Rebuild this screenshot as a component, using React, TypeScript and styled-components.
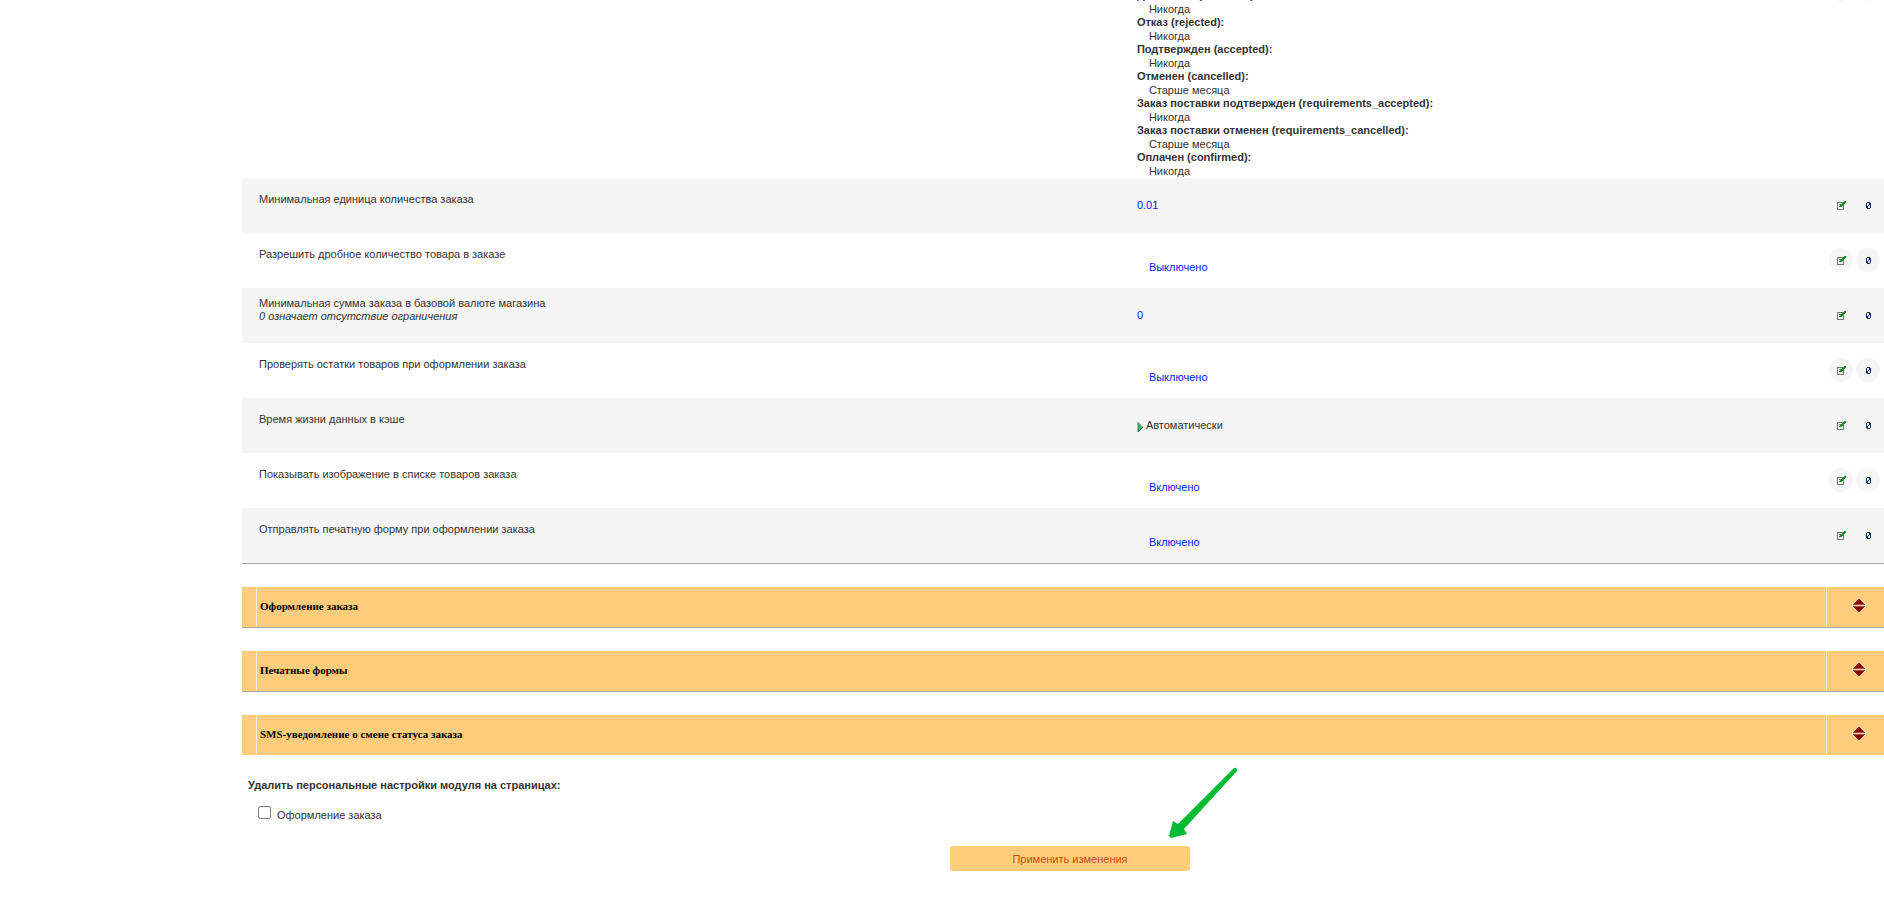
import React from "react";
import styled, { createGlobalStyle } from "styled-components";

const GlobalStyle = createGlobalStyle`
  *, *::before, *::after { box-sizing: border-box; }
  body {
    margin: 0;
    background: #fff;
    color: #333;
    font: 11px/13px "Liberation Sans", Arial, sans-serif;
    overflow: hidden;
  }
`;

const Page = styled.main`
  display: flex;
  flex-direction: column;
  padding-left: 242px;
`;

const Settings = styled.table`
  width: 100%;
  table-layout: fixed;
  border-collapse: separate;
  border-spacing: 0;
  border-bottom: 1px solid #aaa;
`;

const NameColumn = styled.col`
  width: 54.5%;
`;

const ActionsColumn = styled.col`
  width: 60px;
`;

const Row = styled.tr<{ $shaded?: boolean }>`
  height: 55px;
  background: ${(p) => (p.$shaded ? "#f5f5f5" : "#fff")};
`;

const NameCell = styled.td<{ $hinted?: boolean }>`
  padding: ${(p) => (p.$hinted ? "9px" : "15px")} 0 0 17px;
  vertical-align: top;
`;

const Hint = styled.em`
  display: block;
`;

const ValueCell = styled.td`
  padding: 0;
  vertical-align: middle;
`;

const Value = styled.div<{ $nested?: boolean }>`
  color: #001eff;
  padding: ${(p) => (p.$nested ? "14px 0 0 12px" : "0")};
`;

const AutoValue = styled.div`
  display: flex;
  align-items: center;
  gap: 3px;
`;

const ActionsCell = styled.td<{ $top?: boolean }>`
  padding: 0;
  vertical-align: ${(p) => (p.$top ? "top" : "middle")};
`;

const Actions = styled.div<{ $scrolled?: boolean }>`
  display: flex;
  gap: 3px;
  margin-top: ${(p) => (p.$scrolled ? "-23px" : "0")};
  padding: 0 0 1px 5px;
`;

const RoundButton = styled.button`
  display: flex;
  align-items: center;
  justify-content: center;
  width: 24px;
  height: 24px;
  padding: 0;
  border: 0;
  border-radius: 50%;
  background: #f5f5f5;
`;

const StatusViewport = styled.div`
  display: flex;
  flex-direction: column;
  justify-content: flex-end;
  height: 178px;
  overflow: hidden;
`;

const StatusList = styled.dl`
  margin: 0;
  dt { font-weight: bold; }
  dd { margin: 0 0 0 12px; height: 14px; padding-top: 1px; overflow: hidden; }
`;

const Section = styled.section<{ $last?: boolean }>`
  display: grid;
  grid-template-columns: 15px 1fr 58px;
  height: ${(p) => (p.$last ? "40px" : "41px")};
  margin-top: 23px;
  border-bottom: ${(p) => (p.$last ? "0" : "1px solid #aaa")};
`;

const SectionPart = styled.div`
  display: flex;
  align-items: center;
  background: #fecc7b;

  & + & { border-left: 1px solid #fff0d8; }
  &:first-child { margin-right: 1px; }
  &:nth-child(2) { margin-left: -1px; }
`;

const SectionTitle = styled.h2`
  margin: 0;
  padding: 0 0 1px 3px;
  color: #000;
  font: bold 11px/13px "Liberation Serif", "Times New Roman", serif;
`;

const ToggleButton = styled.button`
  display: flex;
  margin: 0 auto;
  padding: 0 0 3px 7px;
  border: 0;
  background: none;
`;

const Form = styled.form`
  display: flex;
  flex-direction: column;
`;

const Reset = styled.fieldset`
  margin: 24px 0 0;
  padding: 0 6px;
  border: 0;
  legend { padding: 0; font-weight: bold; }
`;

const CheckLabel = styled.label`
  display: flex;
  gap: 6px;
  padding: 14px 0 0 10px;
  input { width: 13px; height: 13px; margin: 0; }
  span { padding-top: 3px; }
`;

const Submit = styled.button`
  align-self: center;
  position: relative;
  width: 240px;
  height: 25px;
  margin: 24px 0 0 14px;
  padding: 1px 0 0;
  border: 0;
  border-radius: 3px;
  background: #fecc7b;
  color: #c94a13;
  font: inherit;
`;

const Arrow = styled.svg`
  position: absolute;
  left: 218px;
  bottom: 32px;
`;

const EditIcon = () => (
  <svg width="9" height="9" viewBox="0 0 9 9" shapeRendering="crispEdges" aria-hidden="true">
    <path d="M0 1h7v8H0zM1 2v6h5V2z" fill="#777" fillRule="evenodd" />
    <path d="M2 3h2v1H2zM2 5h1v1H2z" fill="#777" />
    <path d="M7 0h2v2H8v1H7v1H6v1H5v1H2V5h1V4h1V3h1V2h1V1h1z" fill="#0a9020" />
  </svg>
);

const ZeroIcon = () => (
  <svg width="5" height="7" viewBox="0 0 5 7" shapeRendering="crispEdges" aria-hidden="true">
    <path d="M1 0h3v1H1zM0 1h1v5H0zM4 1h1v5H4zM1 6h3v1H1z" fill="#0a2a5e" />
    <path d="M3 1h1v2H3zM2 3h1v1H2zM1 4h1v2H1z" fill="#0a2a5e" />
  </svg>
);

const PlayIcon = () => (
  <svg width="6" height="12" viewBox="0 0 6 12" aria-hidden="true">
    <path d="M1 2L6 7L1 12Z" fill="#3cb371" />
    <path d="M1 12L6 7" stroke="#145c3a" />
    <path d="M1 2v10" stroke="#2f8f5a" />
  </svg>
);

const ToggleIcon = () => (
  <svg width="14" height="13" viewBox="0 0 14 13" aria-hidden="true">
    <path d="M6 0H8L14 5V8L8 13H6L0 8V5Z" fill="#fff0d8" />
    <path d="M6.5 0H7.5L13 5.5H1ZM6.5 13H7.5L13 7.5H1Z" fill="#860000" />
    <path d="M1 5h12v1H1zM1 7h12v1H1z" fill="#b0504c" />
    <path d="M1 6h12v1H1z" fill="#fecc9b" />
  </svg>
);

const ButtonPair = ({ scrolled }: { scrolled?: boolean }) => (
  <Actions $scrolled={scrolled}>
    <RoundButton type="button" aria-label="Изменить"><EditIcon /></RoundButton>
    <RoundButton type="button" aria-label="Сбросить"><ZeroIcon /></RoundButton>
  </Actions>
);

const statuses = [
  ["Доставлен (delivered):", "Никогда"],
  ["Отказ (rejected):", "Никогда"],
  ["Подтвержден (accepted):", "Никогда"],
  ["Отменен (cancelled):", "Старше месяца"],
  ["Заказ поставки подтвержден (requirements_accepted):", "Никогда"],
  ["Заказ поставки отменен (requirements_cancelled):", "Старше месяца"],
  ["Оплачен (confirmed):", "Никогда"],
];

type Setting = { name: string; hint?: string; value: string; kind: "plain" | "nested" | "auto" };

const settings: Setting[] = [
  { name: "Минимальная единица количества заказа", value: "0.01", kind: "plain" },
  { name: "Разрешить дробное количество товара в заказе", value: "Выключено", kind: "nested" },
  { name: "Минимальная сумма заказа в базовой валюте магазина", hint: "0 означает отсутствие ограничения", value: "0", kind: "plain" },
  { name: "Проверять остатки товаров при оформлении заказа", value: "Выключено", kind: "nested" },
  { name: "Время жизни данных в кэше", value: "Автоматически", kind: "auto" },
  { name: "Показывать изображение в списке товаров заказа", value: "Включено", kind: "nested" },
  { name: "Отправлять печатную форму при оформлении заказа", value: "Включено", kind: "nested" },
];

const sections = ["Оформление заказа", "Печатные формы", "SMS-уведомление о смене статуса заказа"];

export default function App() {
  return (
    <>
      <GlobalStyle />
      <Page>
        <Settings>
          <colgroup>
            <NameColumn />
            <col />
            <ActionsColumn />
          </colgroup>
          <tbody>
            <Row>
              <NameCell />
              <ValueCell>
                <StatusViewport>
                  <StatusList>
                    {statuses.map(([name, value]) => (
                      <React.Fragment key={name}>
                        <dt>{name}</dt>
                        <dd>{value}</dd>
                      </React.Fragment>
                    ))}
                  </StatusList>
                </StatusViewport>
              </ValueCell>
              <ActionsCell $top><ButtonPair scrolled /></ActionsCell>
            </Row>
            {settings.map((s, i) => (
              <Row key={s.name} $shaded={i % 2 === 0}>
                <NameCell $hinted={!!s.hint}>
                  {s.name}
                  {s.hint && <Hint>{s.hint}</Hint>}
                </NameCell>
                <ValueCell>
                  {s.kind === "auto" ? (
                    <AutoValue><PlayIcon />{s.value}</AutoValue>
                  ) : (
                    <Value $nested={s.kind === "nested"}>{s.value}</Value>
                  )}
                </ValueCell>
                <ActionsCell><ButtonPair /></ActionsCell>
              </Row>
            ))}
          </tbody>
        </Settings>
        {sections.map((title, i) => (
          <Section key={title} $last={i === sections.length - 1}>
            <SectionPart />
            <SectionPart><SectionTitle>{title}</SectionTitle></SectionPart>
            <SectionPart>
              <ToggleButton type="button" aria-label={title}><ToggleIcon /></ToggleButton>
            </SectionPart>
          </Section>
        ))}
        <Form onSubmit={(e) => e.preventDefault()}>
          <Reset>
            <legend>Удалить персональные настройки модуля на страницах:</legend>
            <CheckLabel>
              <input type="checkbox" />
              <span>Оформление заказа</span>
            </CheckLabel>
          </Reset>
          <Submit type="submit">
            Применить изменения
            <Arrow width="70" height="72" viewBox="0 0 70 72" aria-hidden="true">
              <path d="M66 1Q69 0 69 4L16 62L19 67L3 71L1 69L5 54L10 57Z" fill="#00bb33" />
            </Arrow>
          </Submit>
        </Form>
      </Page>
    </>
  );
}
